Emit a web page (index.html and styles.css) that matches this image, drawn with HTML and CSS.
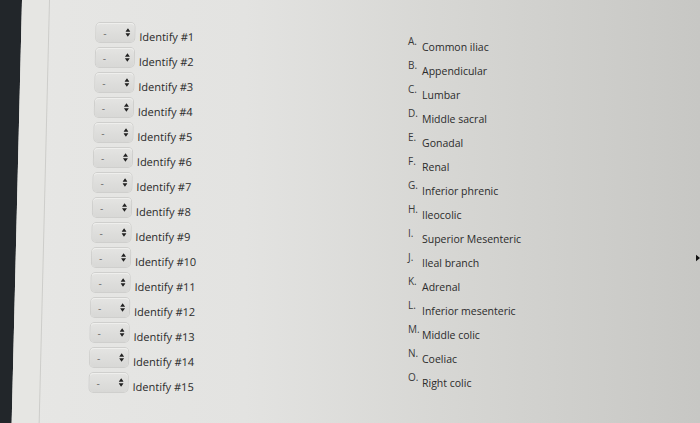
FILE: index.html
```html
<!DOCTYPE html>
<html lang="en">
<head>
  <meta charset="UTF-8">
  <title>Identify</title>
  <link rel="stylesheet" href="styles.css">
</head>
<body>
  <div class="screen">
    <div class="edge">
      <div class="bezel"></div>
      <div class="gutter"></div>
    </div>

    <div class="questions">
      <div class="row"><div class="picker"><span class="dash">-</span><svg class="updown" viewBox="0 0 6 10"><path d="M3 0 L6 4 H0 Z M3 10 L6 6 H0 Z"/></svg></div><span class="label">Identify #1</span></div>
      <div class="row"><div class="picker"><span class="dash">-</span><svg class="updown" viewBox="0 0 6 10"><path d="M3 0 L6 4 H0 Z M3 10 L6 6 H0 Z"/></svg></div><span class="label">Identify #2</span></div>
      <div class="row"><div class="picker"><span class="dash">-</span><svg class="updown" viewBox="0 0 6 10"><path d="M3 0 L6 4 H0 Z M3 10 L6 6 H0 Z"/></svg></div><span class="label">Identify #3</span></div>
      <div class="row"><div class="picker"><span class="dash">-</span><svg class="updown" viewBox="0 0 6 10"><path d="M3 0 L6 4 H0 Z M3 10 L6 6 H0 Z"/></svg></div><span class="label">Identify #4</span></div>
      <div class="row"><div class="picker"><span class="dash">-</span><svg class="updown" viewBox="0 0 6 10"><path d="M3 0 L6 4 H0 Z M3 10 L6 6 H0 Z"/></svg></div><span class="label">Identify #5</span></div>
      <div class="row"><div class="picker"><span class="dash">-</span><svg class="updown" viewBox="0 0 6 10"><path d="M3 0 L6 4 H0 Z M3 10 L6 6 H0 Z"/></svg></div><span class="label">Identify #6</span></div>
      <div class="row"><div class="picker"><span class="dash">-</span><svg class="updown" viewBox="0 0 6 10"><path d="M3 0 L6 4 H0 Z M3 10 L6 6 H0 Z"/></svg></div><span class="label">Identify #7</span></div>
      <div class="row"><div class="picker"><span class="dash">-</span><svg class="updown" viewBox="0 0 6 10"><path d="M3 0 L6 4 H0 Z M3 10 L6 6 H0 Z"/></svg></div><span class="label">Identify #8</span></div>
      <div class="row"><div class="picker"><span class="dash">-</span><svg class="updown" viewBox="0 0 6 10"><path d="M3 0 L6 4 H0 Z M3 10 L6 6 H0 Z"/></svg></div><span class="label">Identify #9</span></div>
      <div class="row"><div class="picker"><span class="dash">-</span><svg class="updown" viewBox="0 0 6 10"><path d="M3 0 L6 4 H0 Z M3 10 L6 6 H0 Z"/></svg></div><span class="label">Identify #10</span></div>
      <div class="row"><div class="picker"><span class="dash">-</span><svg class="updown" viewBox="0 0 6 10"><path d="M3 0 L6 4 H0 Z M3 10 L6 6 H0 Z"/></svg></div><span class="label">Identify #11</span></div>
      <div class="row"><div class="picker"><span class="dash">-</span><svg class="updown" viewBox="0 0 6 10"><path d="M3 0 L6 4 H0 Z M3 10 L6 6 H0 Z"/></svg></div><span class="label">Identify #12</span></div>
      <div class="row"><div class="picker"><span class="dash">-</span><svg class="updown" viewBox="0 0 6 10"><path d="M3 0 L6 4 H0 Z M3 10 L6 6 H0 Z"/></svg></div><span class="label">Identify #13</span></div>
      <div class="row"><div class="picker"><span class="dash">-</span><svg class="updown" viewBox="0 0 6 10"><path d="M3 0 L6 4 H0 Z M3 10 L6 6 H0 Z"/></svg></div><span class="label">Identify #14</span></div>
      <div class="row"><div class="picker"><span class="dash">-</span><svg class="updown" viewBox="0 0 6 10"><path d="M3 0 L6 4 H0 Z M3 10 L6 6 H0 Z"/></svg></div><span class="label">Identify #15</span></div>
    </div>

    <ol class="answers">
      <li><span class="letter">A.</span><span class="term">Common iliac</span></li>
      <li><span class="letter">B.</span><span class="term">Appendicular</span></li>
      <li><span class="letter">C.</span><span class="term">Lumbar</span></li>
      <li><span class="letter">D.</span><span class="term">Middle sacral</span></li>
      <li><span class="letter">E.</span><span class="term">Gonadal</span></li>
      <li><span class="letter">F.</span><span class="term">Renal</span></li>
      <li><span class="letter">G.</span><span class="term">Inferior phrenic</span></li>
      <li><span class="letter">H.</span><span class="term">Ileocolic</span></li>
      <li><span class="letter">I.</span><span class="term">Superior Mesenteric</span></li>
      <li><span class="letter">J.</span><span class="term">Ileal branch</span></li>
      <li><span class="letter">K.</span><span class="term">Adrenal</span></li>
      <li><span class="letter">L.</span><span class="term">Inferior mesenteric</span></li>
      <li><span class="letter">M.</span><span class="term">Middle colic</span></li>
      <li><span class="letter">N.</span><span class="term">Coeliac</span></li>
      <li><span class="letter">O.</span><span class="term">Right colic</span></li>
    </ol>

    <svg class="cursor" viewBox="0 0 6 10"><path d="M0 0 L6 5 L0 10 Z"/></svg>
  </div>
</body>
</html>
```

FILE: styles.css
```css
body {
  margin: 0;
  font-family: "Open Sans", "DejaVu Sans", sans-serif;
  color: #2b2b2b;
  background: #23272a;
  overflow: hidden;
}

.screen {
  position: relative;
  display: flex;
  height: 423px;
  background: linear-gradient(to right, #e7e7e5 0%, #e3e3e1 35%, #d6d6d3 65%, #c7c7c4 100%);
}

/* bezel + gutter, skewed like the photo */
.edge {
  display: flex;
  flex-shrink: 0;
  width: 50px;
  transform: skewX(-1.4deg);
  transform-origin: top left;
}

.bezel {
  width: 22px;
  background: #22262a;
}

.gutter {
  width: 27px;
  background: #e6e6e3;
  border-right: 1px solid #cdcdca;
}

/* Left column */
.questions {
  display: flex;
  flex-direction: column;
  padding: 23px 0 0 47px;
  width: 260px;
  transform: skewX(-1.1deg);
  transform-origin: top left;
}

.row {
  display: flex;
  align-items: flex-start;
  gap: 5px;
  height: 25px;
}

.picker {
  display: flex;
  align-items: center;
  width: 38px;
  height: 19px;
  box-sizing: border-box;
  padding: 0 0 0 7px;
  border-radius: 4px;
  background: linear-gradient(to bottom, #e4e4e2, #d8d8d6);
  box-shadow: 0 0 0 1px #cfcfcd, inset 0 1px 0 #efefed;
}

.dash {
  font-size: 10px;
  color: #666;
  width: 22px;
}

.updown {
  width: 5px;
  height: 9px;
  fill: #222;
}

.label {
  font-size: 11px;
  line-height: 14px;
  padding-top: 7px;
}

/* Right column */
.answers {
  list-style: none;
  margin: 0;
  padding: 36px 0 0 51px;
  display: flex;
  flex-direction: column;
}

.answers li {
  display: flex;
  align-items: flex-start;
  gap: 2px;
  height: 24px;
}

.letter {
  font-size: 10px;
  line-height: 10px;
  color: #3a3a3a;
  width: 12px;
}

.term {
  font-size: 10.5px;
  line-height: 13px;
  padding-top: 5px;
}

.cursor {
  position: absolute;
  right: 0;
  top: 254px;
  width: 4px;
  height: 8px;
  fill: #111;
}
```
